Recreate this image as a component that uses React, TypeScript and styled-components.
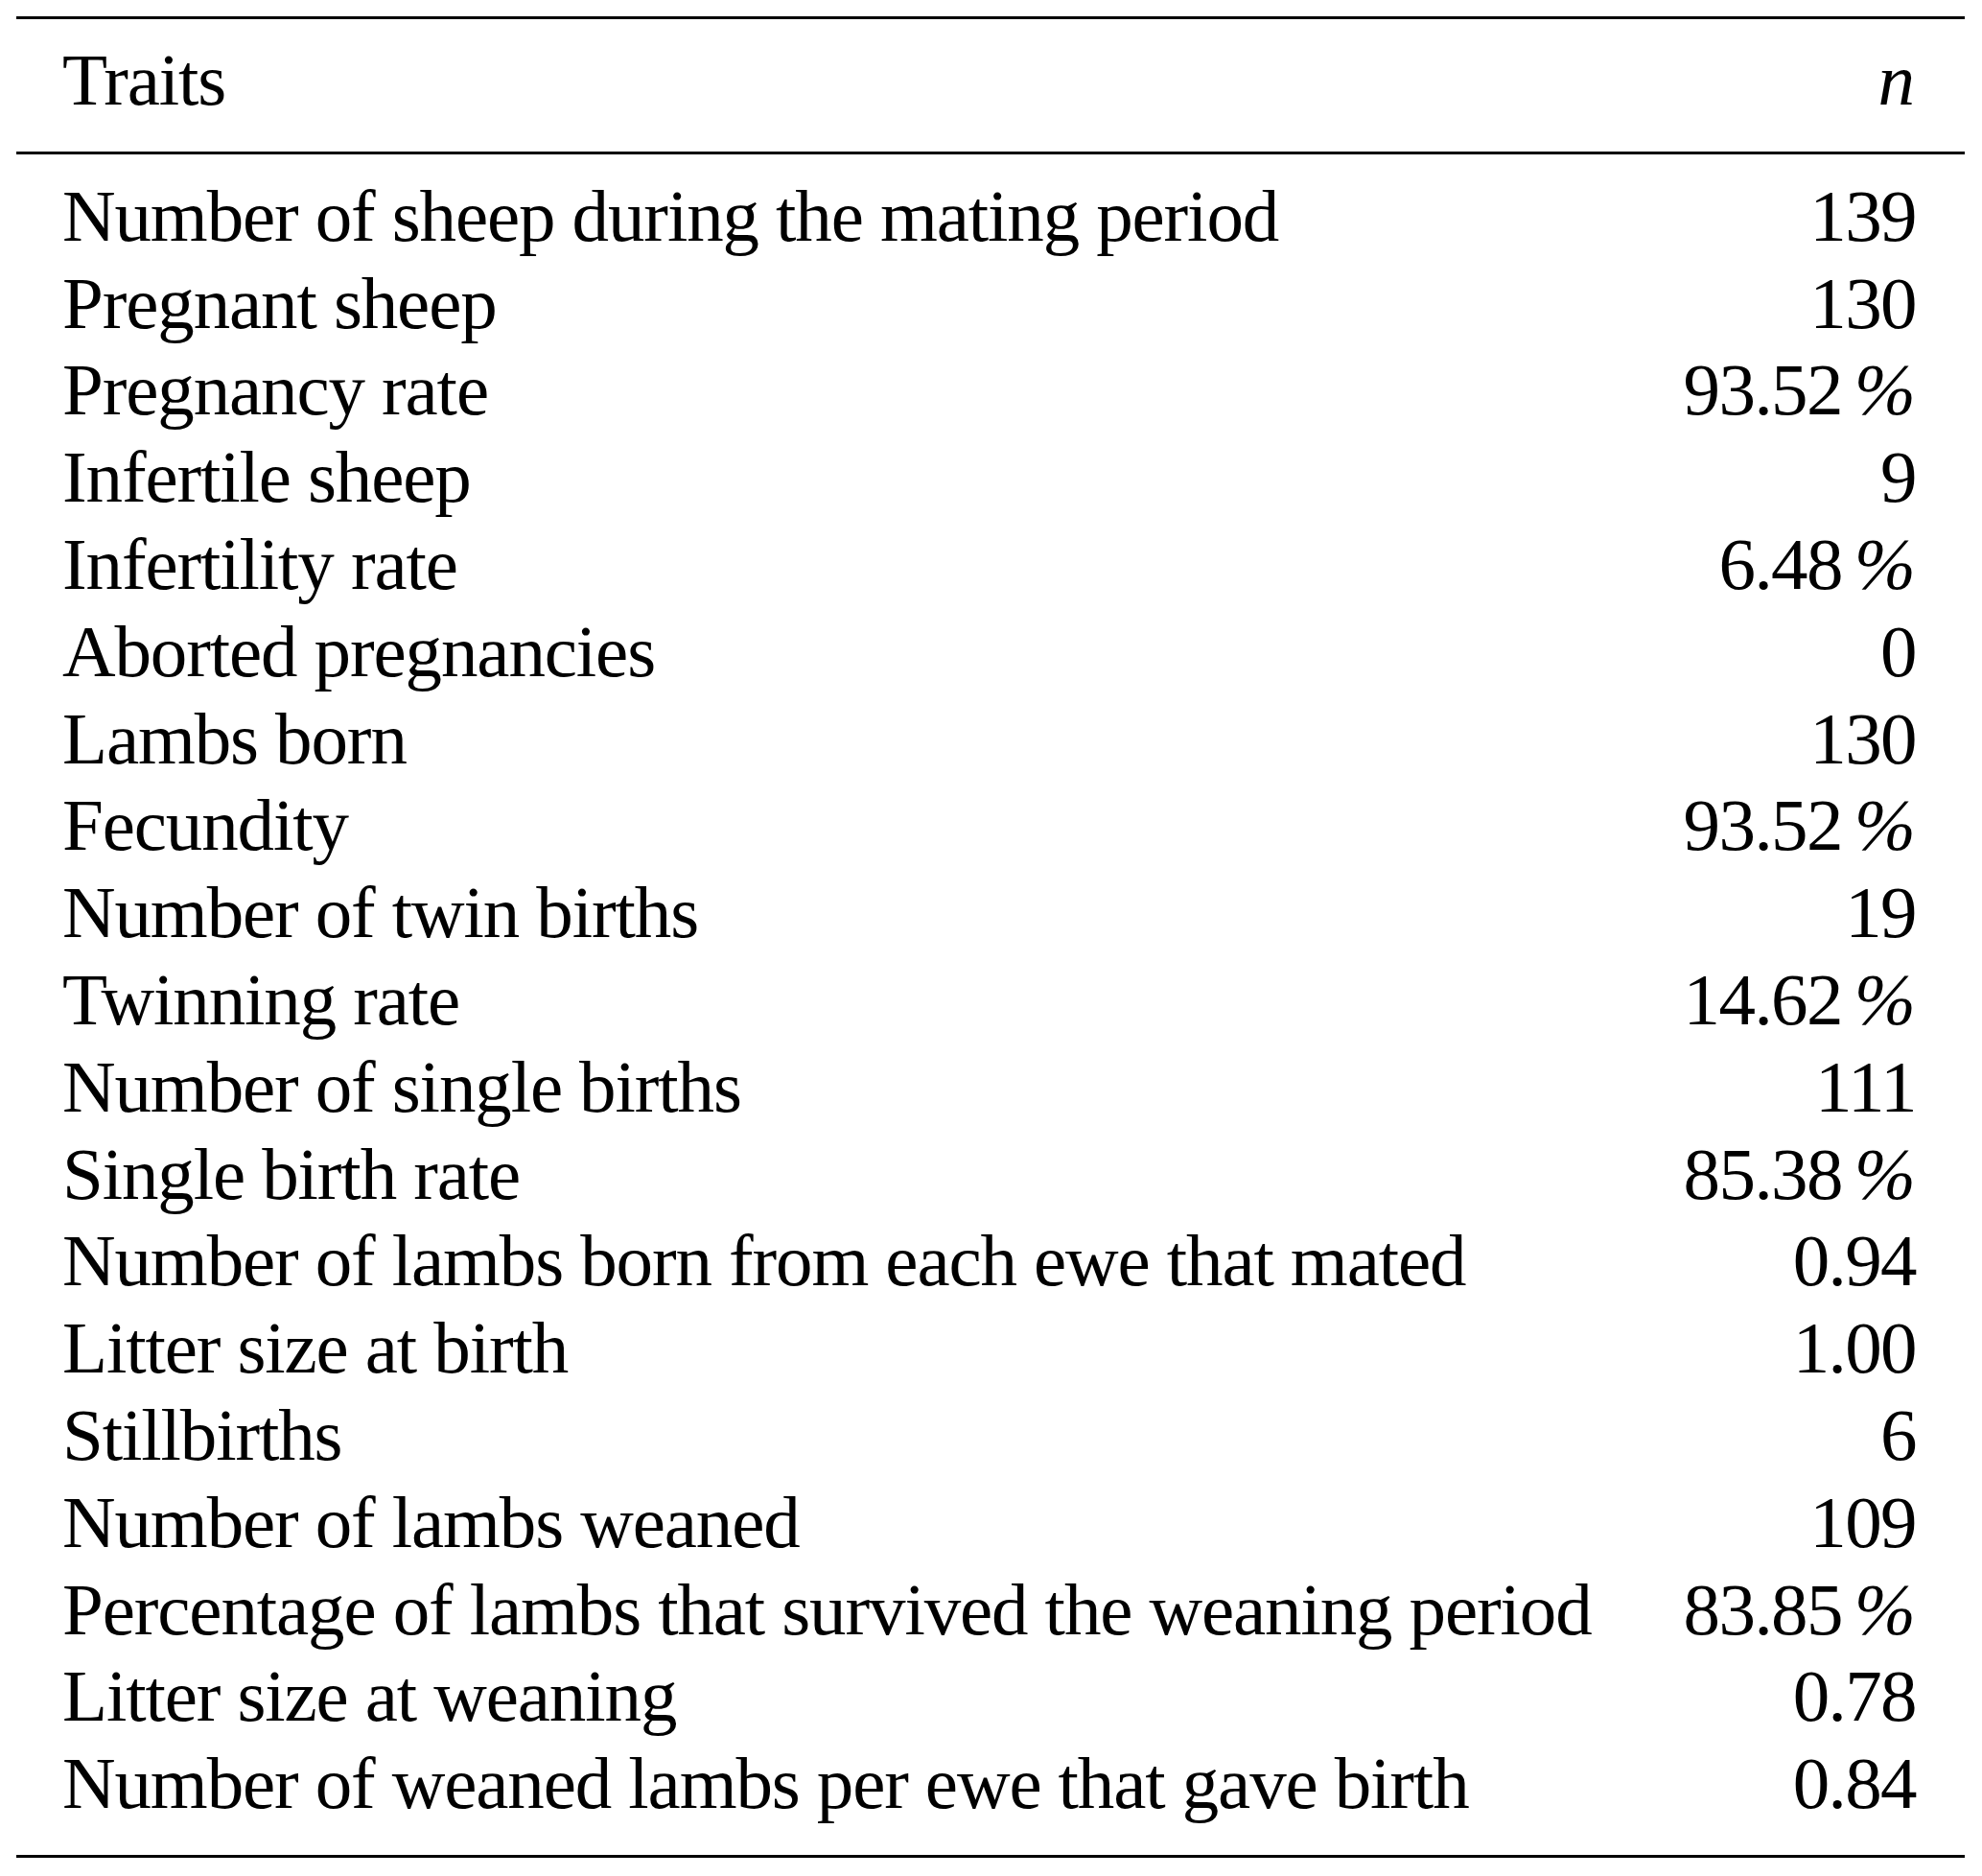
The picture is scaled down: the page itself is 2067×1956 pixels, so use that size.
import React from "react";
import styled, { createGlobalStyle } from "styled-components";

const Global = createGlobalStyle`
  html, body { margin: 0; padding: 0; background: #ffffff; }
  body { font-family: "Liberation Serif", "Times New Roman", serif; color: #000; }
`;

const Page = styled.div`
  padding: 17px 18px 0 17px;
`;

const Table = styled.div`
  width: 2032px;
  border-top: 3px solid #000;
  border-bottom: 3px solid #000;
  font-size: 77px;
  line-height: 90.8px;
  letter-spacing: -1.12px;
`;

const Head = styled.div`
  display: flex;
  justify-content: space-between;
  padding: 18px 53px 29.5px 48px;
  border-bottom: 3px solid #000;
`;

const Body = styled.div`
  display: flex;
  flex-direction: column;
  padding: 18.5px 51px 29.5px 48px;
`;

const Row = styled.div`
  display: flex;
  justify-content: space-between;
  white-space: nowrap;
`;

const Label = styled.span``;

const Value = styled.span`
  text-align: right;
  letter-spacing: -1.6px;
`;

const Italic = styled.span`
  font-style: italic;
`;

const Percent = styled.span`
  font-style: italic;
  margin-left: 13px;
  letter-spacing: 0;
`;

const rows: [string, string, boolean?][] = [
  ["Number of sheep during the mating period", "139"],
  ["Pregnant sheep", "130"],
  ["Pregnancy rate", "93.52", true],
  ["Infertile sheep", "9"],
  ["Infertility rate", "6.48", true],
  ["Aborted pregnancies", "0"],
  ["Lambs born", "130"],
  ["Fecundity", "93.52", true],
  ["Number of twin births", "19"],
  ["Twinning rate", "14.62", true],
  ["Number of single births", "111"],
  ["Single birth rate", "85.38", true],
  ["Number of lambs born from each ewe that mated", "0.94"],
  ["Litter size at birth", "1.00"],
  ["Stillbirths", "6"],
  ["Number of lambs weaned", "109"],
  ["Percentage of lambs that survived the weaning period", "83.85", true],
  ["Litter size at weaning", "0.78"],
  ["Number of weaned lambs per ewe that gave birth", "0.84"],
];

export default function App() {
  return (
    <Page>
      <Global />
      <Table>
        <Head>
          <Label>Traits</Label>
          <Italic>n</Italic>
        </Head>
        <Body>
          {rows.map(([l, v, pct]) => (
            <Row key={l}>
              <Label>{l}</Label>
              <Value>
                {v}
                {pct && <Percent>%</Percent>}
              </Value>
            </Row>
          ))}
        </Body>
      </Table>
    </Page>
  );
}
